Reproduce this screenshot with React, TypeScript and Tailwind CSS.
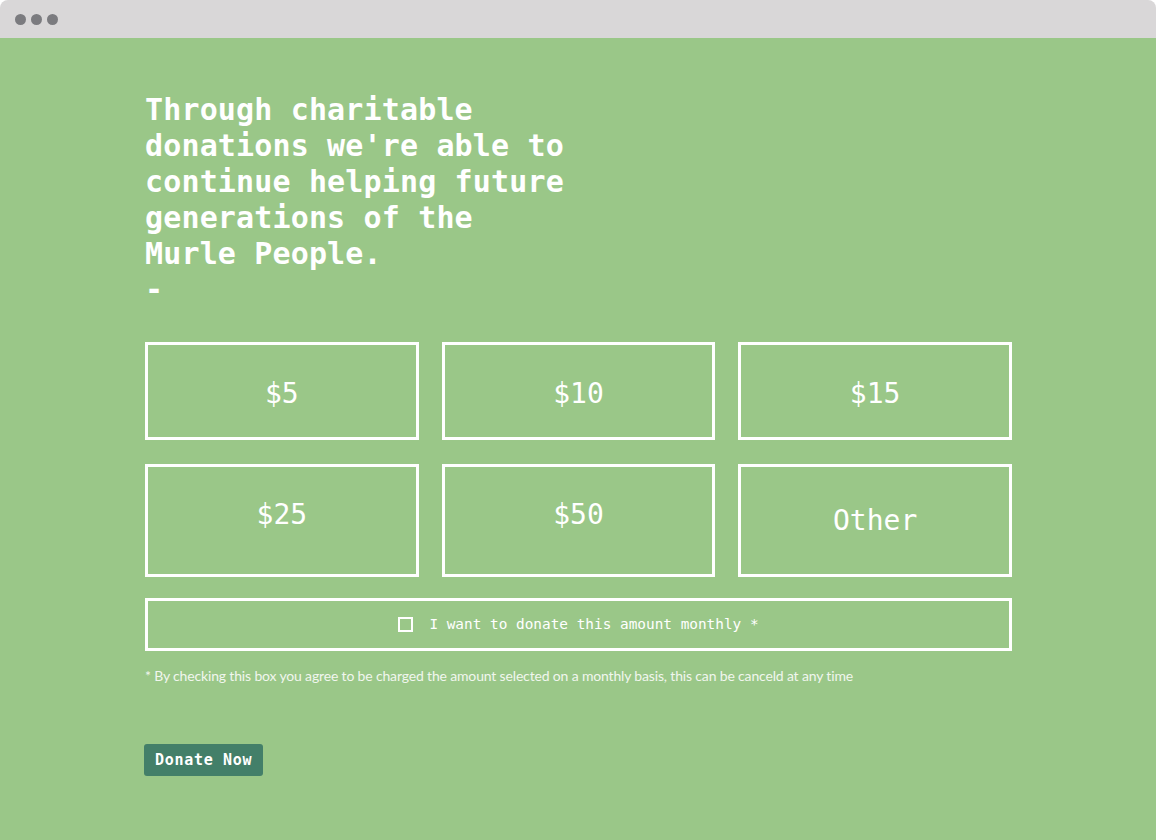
import { useState } from 'react'

const AMOUNTS = [
  { label: '$5', row: 1 },
  { label: '$10', row: 1 },
  { label: '$15', row: 1 },
  { label: '$25', row: 2 },
  { label: '$50', row: 2 },
  { label: 'Other', row: 2 },
] as const

export default function App() {
  const [monthly, setMonthly] = useState(false)

  return (
    <div className="w-[1156px] h-[840px] bg-white overflow-hidden">
      {/* Browser chrome */}
      <div className="h-[38px] bg-[#d9d7d8] rounded-tl-[8px] rounded-tr-[8px] flex items-center gap-[5px] pl-[15px]">
        <span className="w-[11px] h-[11px] rounded-full bg-[#7b7b7f]" />
        <span className="w-[11px] h-[11px] rounded-full bg-[#7b7b7f]" />
        <span className="w-[11px] h-[11px] rounded-full bg-[#7b7b7f]" />
      </div>

      <div className="h-[802px] bg-[#9ac788] pl-[145px] pt-[54px] font-['DejaVu_Sans_Mono',monospace] text-white">
        <h1 className="text-[30px] leading-[36px] font-bold w-[430px] tracking-[0.15px]">
          Through charitable donations we're able to continue helping future generations of the
          Murle People.
          <br />-
        </h1>

        <div className="w-[867px] mt-[34px] grid grid-cols-3 gap-x-[23px] gap-y-[24px]">
          {AMOUNTS.map((a) => (
            <button
              key={a.label}
              className={
                a.row === 1
                  ? 'h-[98px] border-[3px] border-white flex items-center justify-center pt-[6px] text-[28px]'
                  : a.label === 'Other'
                    ? 'h-[113px] border-[3px] border-white flex items-center justify-center text-[28px]'
                    : 'h-[113px] border-[3px] border-white flex items-start justify-center pt-[27px] text-[28px]'
              }
            >
              {a.label}
            </button>
          ))}
        </div>

        <label className="w-[867px] h-[53px] mt-[21px] border-[3px] border-white flex items-center justify-center gap-[16px] text-[14.4px] cursor-pointer">
          <span
            className={
              monthly
                ? 'w-[15px] h-[15px] border-2 border-white bg-white'
                : 'w-[15px] h-[15px] border-2 border-white'
            }
            onClick={() => setMonthly(!monthly)}
          />
          I want to donate this amount monthly *
        </label>

        <p className="mt-[16px] text-[14px] leading-[18px] text-[#f1f6ee] font-['Lato',sans-serif] tracking-[-0.16px]">
          * By checking this box you agree to be charged the amount selected on a monthly basis, this can be canceld at any time
        </p>

        <button className="mt-[59px] -ml-px h-[32px] px-[11px] rounded-[3px] bg-[#437f69] text-[15px] tracking-[0.7px] font-bold text-white">
          Donate Now
        </button>
      </div>
    </div>
  )
}
